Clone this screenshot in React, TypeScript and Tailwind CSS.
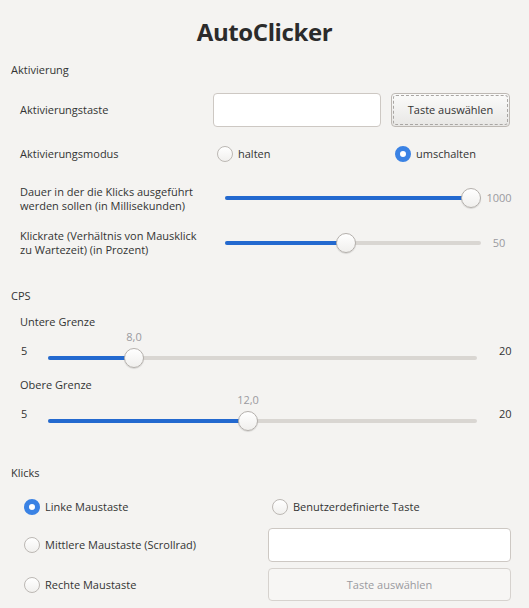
import React from 'react'

const Radio = ({ checked, label }: { checked?: boolean; label: string }) => (
    <div className="flex items-center gap-[5px] h-[20px]">
        {checked ? (
            <div className="w-[16px] h-[16px] rounded-full border-[5px] border-[#3a82e4] bg-white shrink-0" />
        ) : (
            <div className="w-[16px] h-[16px] rounded-full border border-[#bcb8b4] bg-gradient-to-b from-white to-[#f1f0ee] shrink-0" />
        )}
        <span>{label}</span>
    </div>
)

const Slider = ({ width, pos, label }: { width: number; pos: number; label?: string }) => (
    <div className="relative h-[20px] shrink-0" style={{ width }}>
        <div className="absolute left-0 right-0 top-[8px] h-[4px] rounded-full bg-[#d9d6d2]" />
        <div className="absolute left-0 top-[8px] h-[4px] rounded-full bg-[#2369cf]" style={{ width: pos }} />
        <div
            className="absolute top-0 w-[20px] h-[20px] rounded-full border border-[#b4b0ac] bg-gradient-to-b from-white to-[#f0efed] shadow-[0_1px_1px_rgba(0,0,0,0.12)]"
            style={{ left: pos - 10 }}
        />
        {label && (
            <div className="absolute -top-[19px] w-[40px] text-center leading-[16px] text-[#9a9aa0]" style={{ left: pos - 20 }}>
                {label}
            </div>
        )}
    </div>
)

const App = () => {
    return (
        <div className="w-[529px] h-[608px] overflow-hidden bg-[#f4f3f1] text-[11px] leading-[16px] text-[#333] font-['Open_Sans',sans-serif]">
            <h1 className="pt-[16px] text-center text-[24px] leading-[32px] font-bold tracking-[-0.4px] text-[#2b2b2b]">AutoClicker</h1>

            {/* Aktivierung */}
            <div className="mt-[14px] pl-[11px]">Aktivierung</div>

            <div className="mt-[15px] flex items-center pl-[20px]">
                <div className="w-[193px]">Aktivierungstaste</div>
                <div className="w-[168px] h-[34px] rounded-[4px] border border-[#cdc8c3] bg-white" />
                <button className="ml-[10px] w-[119px] h-[34px] rounded-[4px] border border-[#bdb8b3] bg-gradient-to-b from-[#fbfbfa] to-[#e8e7e5] p-[1px]">
                    <div className="h-full rounded-[3px] border border-dashed border-[#a9a6a3] flex items-center justify-center">
                        Taste auswählen
                    </div>
                </button>
            </div>

            <div className="mt-[17px] flex items-center pl-[20px]">
                <div className="w-[197px]">Aktivierungsmodus</div>
                <div className="w-[178px]">
                    <Radio label="halten" />
                </div>
                <Radio checked label="umschalten" />
            </div>

            <div className="mt-[21px] flex items-center pl-[20px]">
                <div className="w-[205px] leading-[14px]">
                    Dauer in der die Klicks ausgeführt
                    <br />
                    werden sollen (in Millisekunden)
                </div>
                <div className="-mt-[3px]">
                    <Slider width={256} pos={246} />
                </div>
                <div className="w-[36px] text-center text-[#9a9aa0] -mt-[3px]">1000</div>
            </div>

            <div className="mt-[16px] flex items-center pl-[20px]">
                <div className="w-[205px] leading-[14px]">
                    Klickrate (Verhältnis von Mausklick
                    <br />
                    zu Wartezeit) (in Prozent)
                </div>
                <Slider width={256} pos={121} />
                <div className="w-[36px] text-center text-[#9a9aa0]">50</div>
            </div>

            {/* CPS */}
            <div className="mt-[31px] pl-[11px]">CPS</div>

            <div className="mt-[10px] pl-[20px]">Untere Grenze</div>
            <div className="mt-[13px] flex items-start pl-[21px]">
                <div className="w-[27px]">5</div>
                <div className="mt-[5px]">
                    <Slider width={429} pos={86} label="8,0" />
                </div>
                <div className="ml-[22px]">20</div>
            </div>

            <div className="mt-[9px] pl-[20px]">Obere Grenze</div>
            <div className="mt-[13px] flex items-start pl-[21px]">
                <div className="w-[27px]">5</div>
                <div className="mt-[5px]">
                    <Slider width={429} pos={200} label="12,0" />
                </div>
                <div className="ml-[22px]">20</div>
            </div>

            {/* Klicks */}
            <div className="mt-[34px] pl-[11px]">Klicks</div>

            <div className="mt-[16px] flex pl-[24px]">
                <div className="w-[244px] flex flex-col">
                    <Radio checked label="Linke Maustaste" />
                    <div className="mt-[11px] h-[34px] flex items-center">
                        <Radio label="Mittlere Maustaste (Scrollrad)" />
                    </div>
                    <div className="mt-[6px] h-[33px] flex items-center">
                        <Radio label="Rechte Maustaste" />
                    </div>
                </div>
                <div className="w-[243px] flex flex-col">
                    <div className="pl-[4px]">
                        <Radio label="Benutzerdefinierte Taste" />
                    </div>
                    <div className="mt-[11px] h-[34px] rounded-[4px] border border-[#cdc8c3] bg-white" />
                    <div className="mt-[6px] h-[33px] rounded-[4px] border border-[#d6d2ce] bg-[#f7f6f4] flex items-center justify-center text-[#9a9aa0]">
                        Taste auswählen
                    </div>
                </div>
            </div>
        </div>
    )
}

export default App
